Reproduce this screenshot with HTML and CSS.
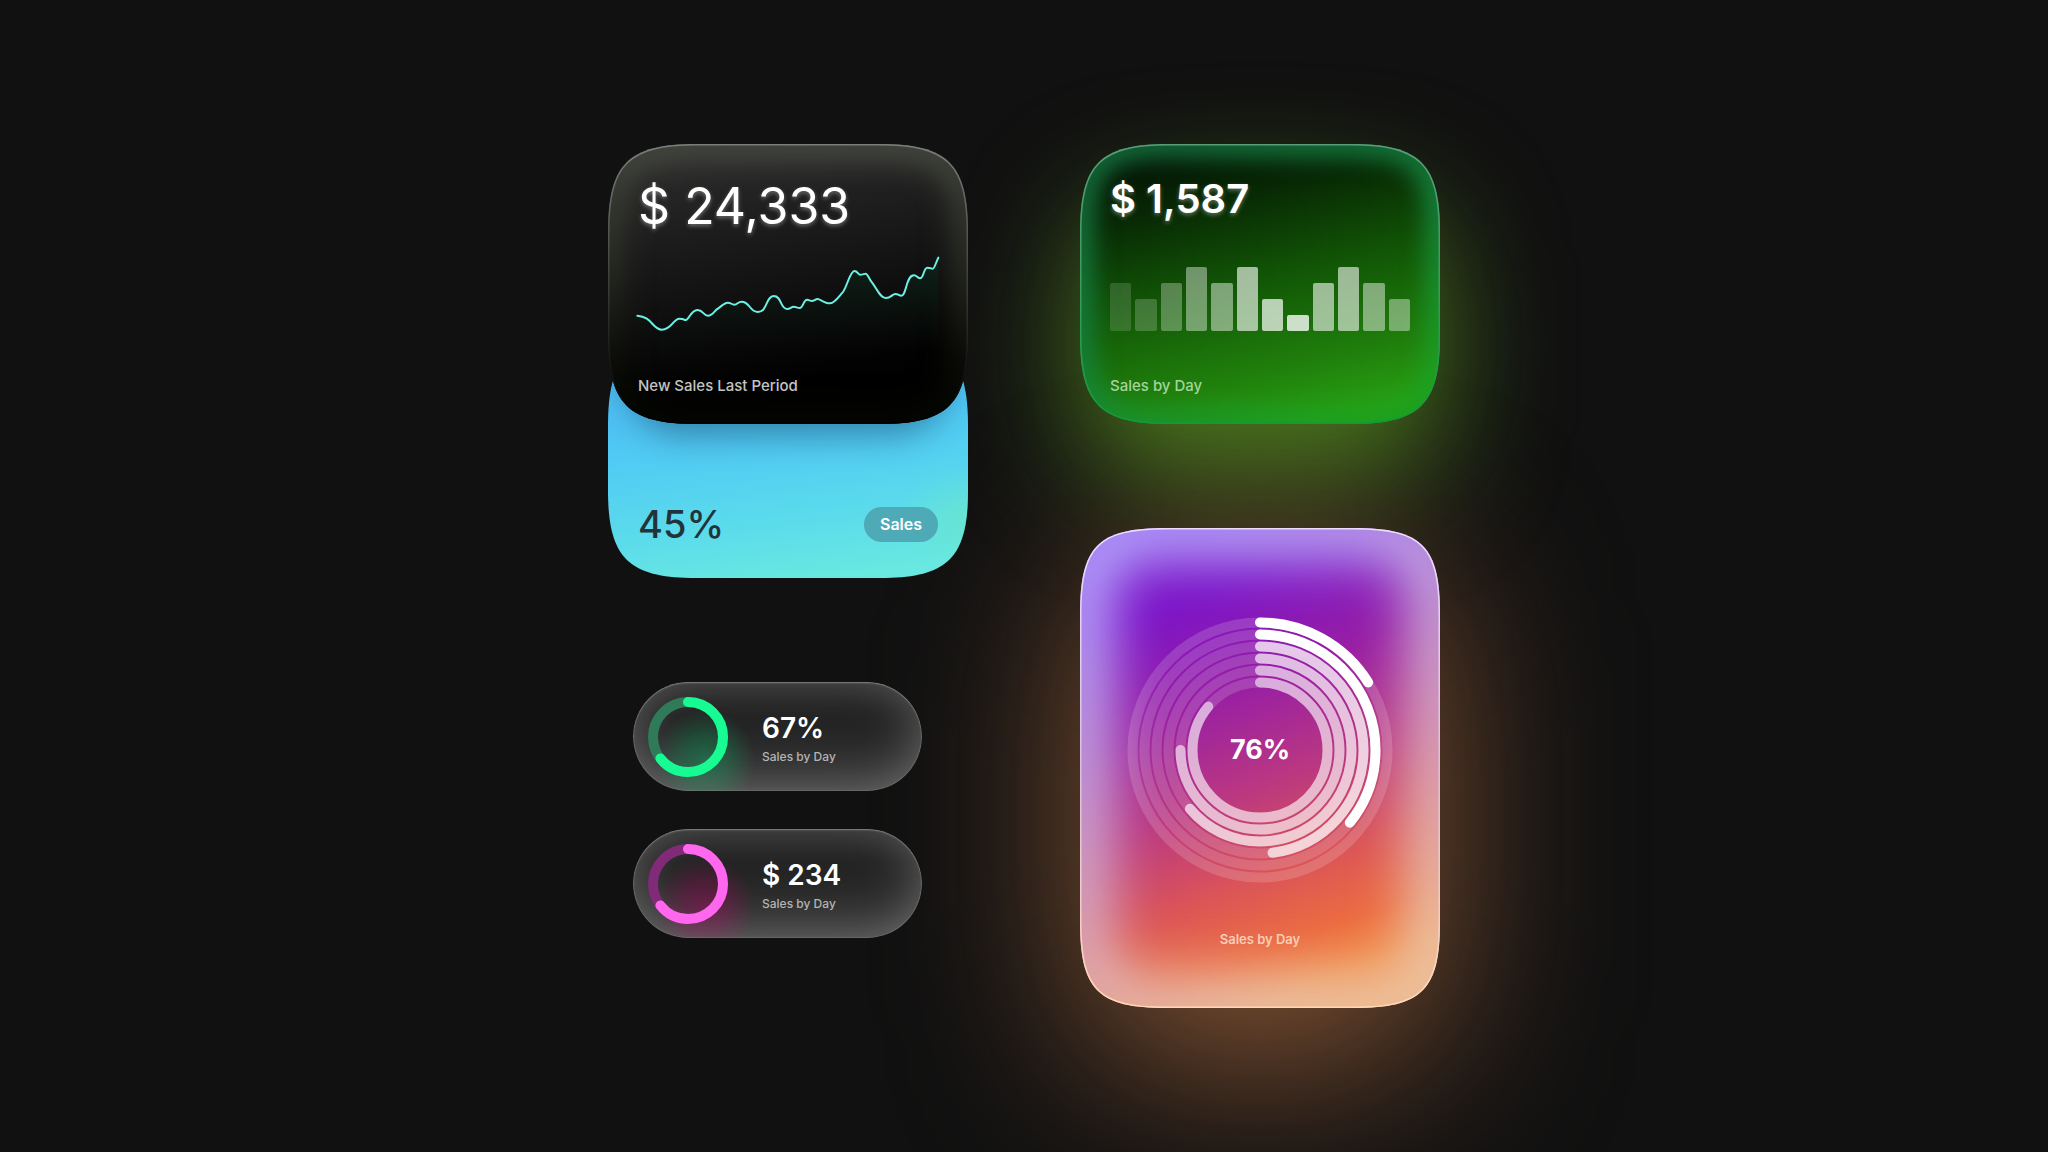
FILE: index.html
```html
<!DOCTYPE html>
<html lang="en">
<head>
<meta charset="utf-8">
<meta name="viewport" content="width=device-width, initial-scale=1">
<title>Sales widgets</title>
<link rel="stylesheet" href="styles.css">
</head>
<body>
<main class="board">
  <div class="column">
    <div class="stack">
      <section class="card card-dark">
        <svg class="backdrop" viewBox="0 0 360 280" aria-hidden="true">
          <defs>
            <path id="tile" d="M0 88C0 20 20 0 88 0H272C340 0 360 20 360 88V192C360 260 340 280 272 280H88C20 280 0 260 0 192Z"/>
            <clipPath id="tile-clip"><use href="#tile"/></clipPath>
            <linearGradient id="dark-fill" x1="0.4" y1="0" x2="0.6" y2="1">
              <stop offset="0" stop-color="#2c2c2c"/><stop offset="0.35" stop-color="#191919"/><stop offset="0.8" stop-color="#020202"/><stop offset="1" stop-color="#000"/>
            </linearGradient>
            <linearGradient id="dark-rim" gradientUnits="userSpaceOnUse" x1="0" y1="0" x2="0" y2="280">
              <stop offset="0" stop-color="#454840"/><stop offset="0.45" stop-color="#272a22"/><stop offset="0.8" stop-color="#0a0c06"/><stop offset="1" stop-color="#030500"/>
            </linearGradient>
            <linearGradient id="dark-edge" x1="0" y1="0" x2="0" y2="1">
              <stop offset="0" stop-color="#7c7c7a"/><stop offset="0.4" stop-color="#4a4a48"/><stop offset="0.75" stop-color="#1a1a1a"/><stop offset="1" stop-color="#000"/>
            </linearGradient>
            <filter id="soft" x="-20%" y="-20%" width="140%" height="140%" color-interpolation-filters="sRGB"><feGaussianBlur stdDeviation="14"/></filter>
          </defs>
          <g clip-path="url(#tile-clip)">
            <use href="#tile" fill="url(#dark-fill)"/>
            <use href="#tile" fill="none" stroke="url(#dark-rim)" stroke-width="34" filter="url(#soft)"/>
            <use href="#tile" fill="none" stroke="url(#dark-edge)" stroke-width="3"/>
          </g>
        </svg>
        <div class="content">
          <h2 class="amount amount-large">$ 24,333</h2>
          <svg class="trend" viewBox="42 12 900 318" aria-hidden="true">
            <defs>
              <linearGradient id="trend-fill" x1="0" y1="0" x2="0" y2="1">
                <stop offset="0" stop-color="#0c2a1c" stop-opacity="0.7"/><stop offset="1" stop-color="#06140c" stop-opacity="0"/>
              </linearGradient>
            </defs>
            <path class="trend-area" fill="url(#trend-fill)" d="M40 227C85 230 85 269 114 269S148 236 166 236S178 241 186 240S202 210 220 210S238 227 252 227S272 211 280 207S300 188 311 188S322 194 331 194S342 185 353 185C378 185 376 216 402 216C430 216 426 168 449 168C474 168 468 207 490 207C498 207 502 200 509 200S520 204 527 204C538 204 538 179 549 179C555 179 558 183 564 183S574 177 581 177S602 190 617 190S644 170 656 157S678 93 691 93C701 93 702 104 709 104S720 101 725 101S735 114 740 122C762 150 768 174 785 174S804 162 814 162S824 167 832 167C848 167 845 106 870 106C878 106 882 115 888 115C900 115 898 83 910 83S920 86 926 86S936 66 943 53V330H40Z"/>
            <path class="trend-line" d="M40 227C85 230 85 269 114 269S148 236 166 236S178 241 186 240S202 210 220 210S238 227 252 227S272 211 280 207S300 188 311 188S322 194 331 194S342 185 353 185C378 185 376 216 402 216C430 216 426 168 449 168C474 168 468 207 490 207C498 207 502 200 509 200S520 204 527 204C538 204 538 179 549 179C555 179 558 183 564 183S574 177 581 177S602 190 617 190S644 170 656 157S678 93 691 93C701 93 702 104 709 104S720 101 725 101S735 114 740 122C762 150 768 174 785 174S804 162 814 162S824 167 832 167C848 167 845 106 870 106C878 106 882 115 888 115C900 115 898 83 910 83S920 86 926 86S936 66 943 53"/>
          </svg>
          <p class="caption">New Sales Last Period</p>
        </div>
      </section>
      <section class="card card-blue">
        <svg class="backdrop" viewBox="0 0 360 240" aria-hidden="true">
          <defs>
            <clipPath id="blue-clip"><path d="M0 88C0 20 20 0 88 0H272C340 0 360 20 360 88V152C360 220 340 240 272 240H88C20 240 0 220 0 152Z"/></clipPath>
            <linearGradient id="blue-fill" x1="0.42" y1="0.1" x2="0.58" y2="1">
              <stop offset="0" stop-color="#4cb8f2"/><stop offset="0.35" stop-color="#50caf4"/><stop offset="0.7" stop-color="#5adaec"/><stop offset="1" stop-color="#68e8e0"/>
            </linearGradient>
            <radialGradient id="mint" cx="1.02" cy="0.75" r="0.22">
              <stop offset="0" stop-color="#6ee8bc" stop-opacity="0.6"/><stop offset="1" stop-color="#6ee8cc" stop-opacity="0"/>
            </radialGradient>
            <filter id="shade" x="-20%" y="-30%" width="140%" height="160%" color-interpolation-filters="sRGB"><feGaussianBlur stdDeviation="16"/></filter>
          </defs>
          <g clip-path="url(#blue-clip)">
            <rect width="360" height="240" fill="url(#blue-fill)"/>
            <rect width="360" height="240" fill="url(#mint)"/>
            <rect x="16" y="-60" width="328" height="158" rx="60" fill="#1a4a6a" opacity="0.5" filter="url(#shade)"/>
          </g>
        </svg>
        <div class="content content-row">
          <p class="share">45%</p>
          <button class="tag" type="button">Sales</button>
        </div>
      </section>
    </div>
    <div class="pills">
      <section class="pill pill-green">
        <svg class="donut" viewBox="0 0 80 80" aria-hidden="true">
          <circle class="donut-track" cx="40" cy="40" r="35"/>
          <circle class="donut-value" cx="40" cy="40" r="35" pathLength="360" stroke-dasharray="232 360"/>
        </svg>
        <div class="pill-text">
          <p class="pill-number">67%</p>
          <p class="pill-label">Sales by Day</p>
        </div>
      </section>
      <section class="pill pill-pink">
        <svg class="donut" viewBox="0 0 80 80" aria-hidden="true">
          <circle class="donut-track" cx="40" cy="40" r="35"/>
          <circle class="donut-value" cx="40" cy="40" r="35" pathLength="360" stroke-dasharray="232 360"/>
        </svg>
        <div class="pill-text">
          <p class="pill-number">$ 234</p>
          <p class="pill-label">Sales by Day</p>
        </div>
      </section>
    </div>
  </div>
  <div class="column">
    <section class="card card-green">
      <svg class="backdrop" viewBox="0 0 360 280" aria-hidden="true">
        <defs>
          <linearGradient id="green-fill" x1="0.36" y1="0" x2="0.64" y2="1">
            <stop offset="0" stop-color="#041204"/><stop offset="0.2" stop-color="#082a04"/><stop offset="0.5" stop-color="#125806"/><stop offset="0.8" stop-color="#20800c"/><stop offset="1" stop-color="#28a214"/>
          </linearGradient>
          <linearGradient id="green-rim" gradientUnits="userSpaceOnUse" x1="120" y1="0" x2="240" y2="280">
            <stop offset="0" stop-color="#146c3a"/><stop offset="0.5" stop-color="#14803a"/><stop offset="1" stop-color="#1ca020"/>
          </linearGradient>
          <linearGradient id="green-edge" x1="0" y1="0" x2="0" y2="1">
            <stop offset="0" stop-color="#5a9c7a"/><stop offset="0.5" stop-color="#3f9a60"/><stop offset="1" stop-color="#149838"/>
          </linearGradient>
          <filter id="soft-green" x="-20%" y="-20%" width="140%" height="140%" color-interpolation-filters="sRGB"><feGaussianBlur stdDeviation="11"/></filter>
        </defs>
        <g clip-path="url(#tile-clip)">
          <use href="#tile" fill="url(#green-fill)"/>
          <use href="#tile" fill="none" stroke="url(#green-rim)" stroke-width="28" filter="url(#soft-green)"/>
          <use href="#tile" fill="none" stroke="url(#green-edge)" stroke-width="3"/>
        </g>
      </svg>
      <div class="content">
        <h2 class="amount">$ 1,587</h2>
        <div class="bars">
          <span class="bar" style="height:48px;opacity:.15"></span>
          <span class="bar" style="height:32px;opacity:.2"></span>
          <span class="bar" style="height:48px;opacity:.3"></span>
          <span class="bar" style="height:64px;opacity:.41"></span>
          <span class="bar" style="height:48px;opacity:.46"></span>
          <span class="bar" style="height:64px;opacity:.62"></span>
          <span class="bar" style="height:32px;opacity:.7"></span>
          <span class="bar" style="height:16px;opacity:.78"></span>
          <span class="bar" style="height:48px;opacity:.58"></span>
          <span class="bar" style="height:64px;opacity:.58"></span>
          <span class="bar" style="height:48px;opacity:.46"></span>
          <span class="bar" style="height:32px;opacity:.4"></span>
        </div>
        <p class="caption caption-green">Sales by Day</p>
      </div>
    </section>
    <section class="card card-sunset">
      <svg class="backdrop" viewBox="0 0 360 480" aria-hidden="true">
        <defs>
          <path id="tall" d="M0 86C0 18 18 0 86 0H274C342 0 360 18 360 86V394C360 462 342 480 274 480H86C18 480 0 462 0 394Z"/>
          <clipPath id="tall-clip"><use href="#tall"/></clipPath>
          <linearGradient id="sunset-fill" gradientUnits="userSpaceOnUse" x1="110" y1="70" x2="250" y2="450">
            <stop offset="0" stop-color="#7c14c8"/><stop offset="0.25" stop-color="#981fa4"/><stop offset="0.5" stop-color="#bb3880"/><stop offset="0.72" stop-color="#dc5656"/><stop offset="0.88" stop-color="#ec6c40"/><stop offset="1" stop-color="#f28c48"/>
          </linearGradient>
          <linearGradient id="sunset-rim" gradientUnits="userSpaceOnUse" x1="60" y1="20" x2="300" y2="460">
            <stop offset="0" stop-color="#b4a8ff"/><stop offset="0.3" stop-color="#c4ace4"/><stop offset="0.65" stop-color="#dcb0bc"/><stop offset="1" stop-color="#ecc8a8"/>
          </linearGradient>
          <linearGradient id="sunset-edge" x1="0" y1="0" x2="0" y2="1">
            <stop offset="0" stop-color="#ecdcff"/><stop offset="0.5" stop-color="#d8c0e0"/><stop offset="1" stop-color="#ffd8b8"/>
          </linearGradient>
          <filter id="soft-sunset" x="-35%" y="-35%" width="170%" height="170%" color-interpolation-filters="sRGB"><feGaussianBlur stdDeviation="27"/></filter>
        </defs>
        <g clip-path="url(#tall-clip)">
          <use href="#tall" fill="url(#sunset-fill)"/>
          <use href="#tall" fill="none" stroke="url(#sunset-rim)" stroke-width="62" filter="url(#soft-sunset)"/>
          <use href="#tall" fill="none" stroke="url(#sunset-edge)" stroke-width="3"/>
        </g>
      </svg>
      <div class="content content-center">
        <div class="gauge">
          <svg class="rings" viewBox="0 0 266 266" aria-hidden="true">
            <g class="ring-tracks">
              <circle cx="133" cy="133" r="127.5"/><circle cx="133" cy="133" r="115.5"/><circle cx="133" cy="133" r="103.5"/><circle cx="133" cy="133" r="91.5"/><circle cx="133" cy="133" r="79.5"/><circle cx="133" cy="133" r="67.5"/>
            </g>
            <g class="ring-values" transform="rotate(-90 133 133)">
              <circle cx="133" cy="133" r="127.5" pathLength="360" stroke-dasharray="58 360"/>
              <circle cx="133" cy="133" r="115.5" pathLength="360" stroke-dasharray="129 360"/>
              <circle cx="133" cy="133" r="103.5" pathLength="360" stroke-dasharray="173 360" stroke-opacity="0.71"/>
              <circle cx="133" cy="133" r="91.5" pathLength="360" stroke-dasharray="230 360" stroke-opacity="0.65"/>
              <circle cx="133" cy="133" r="79.5" pathLength="360" stroke-dasharray="270 360" stroke-opacity="0.58"/>
              <circle cx="133" cy="133" r="67.5" pathLength="360" stroke-dasharray="310 360" stroke-opacity="0.56"/>
            </g>
          </svg>
          <p class="gauge-value">76%</p>
        </div>
        <p class="gauge-label">Sales by Day</p>
      </div>
    </section>
  </div>
</main>
</body>
</html>
```

FILE: styles.css
```css
* {
  box-sizing: border-box;
}

body {
  margin: 0;
  background: #111;
  color: #fff;
  font-family: Inter, "Liberation Sans", sans-serif;
}

h2,
p {
  margin: 0;
  font-weight: 400;
}

.board {
  display: grid;
  grid-template-columns: repeat(auto-fit, 360px);
  justify-content: center;
  align-content: center;
  column-gap: 112px;
  row-gap: 104px;
  min-height: 100vh;
  padding: 40px 0;
  overflow: hidden;
  isolation: isolate;
}

.column {
  display: flex;
  flex-direction: column;
  gap: 104px;
}

.stack {
  display: flex;
  flex-direction: column;
}

/* Cards: the drawn surface and the content share one grid cell */
.card {
  display: grid;
  position: relative;
}

.backdrop,
.content {
  grid-area: 1 / 1;
  position: relative;
}

.backdrop {
  display: block;
  width: 100%;
}

.content {
  display: flex;
  flex-direction: column;
  padding: 24px 30px;
}

.card-dark {
  z-index: 1;
}

.card-blue {
  margin-top: -86px;
}

.content-row {
  flex-direction: row;
  align-items: flex-end;
  justify-content: space-between;
  padding: 0 30px 36px;
}

.content-center {
  align-items: center;
  padding: 89px 0 0;
}

.amount {
  font-size: 40px;
  font-weight: 600;
  line-height: 61px;
  text-shadow: 0 2px 4px rgba(255, 255, 255, 0.35);
}

.amount-large {
  font-size: 50px;
  font-weight: 400;
  line-height: 76px;
}

.trend {
  display: block;
  width: 300px;
  height: 106px;
  overflow: visible;
}

.trend-line {
  fill: none;
  stroke: #6cf0e4;
  stroke-width: 6;
  stroke-linecap: round;
  stroke-linejoin: round;
}

.caption {
  margin-top: auto;
  font-size: 15px;
  font-weight: 500;
  line-height: 28px;
  color: #c4c4c4;
}

.caption-green {
  color: #a4d49c;
}

.share {
  font-size: 38px;
  font-weight: 500;
  line-height: 36px;
  color: #22343a;
}

.tag {
  height: 35px;
  padding: 0 16px;
  border: 0;
  border-radius: 18px;
  background: #4eaab6;
  color: #fff;
  font: 600 16px/35px Inter, "Liberation Sans", sans-serif;
}

.bars {
  display: grid;
  grid-template-columns: repeat(12, 1fr);
  align-items: end;
  gap: 4px;
  height: 64px;
  margin-top: 38px;
}

.bar {
  border-radius: 2px;
  background: #fff;
}

/* Light spilling from the two bright cards */
.card-green::before,
.card-sunset::before {
  content: "";
  position: absolute;
  z-index: -1;
  border-radius: 80px;
}

.card-green::before {
  inset: 60px 0 -60px;
  background: rgba(84, 136, 32, 0.85);
  filter: blur(60px);
}

.card-sunset::before {
  inset: 40px 0 -60px;
  background: rgba(150, 94, 58, 0.85);
  filter: blur(90px);
}

.pills {
  display: flex;
  flex-direction: column;
  gap: 38px;
  padding-left: 25px;
}

.pill {
  display: flex;
  align-items: center;
  gap: 32px;
  width: 289px;
  height: 109px;
  padding-left: 15px;
  border-radius: 55px;
  box-shadow: inset 0 1px 2px rgba(255, 255, 255, 0.3), inset 0 0 1px 1px rgba(255, 255, 255, 0.1), inset 0 0 48px rgba(255, 255, 255, 0.28);
}

.pill-green {
  --ring: #17fb92;
  --track: #2f7a58;
  background: radial-gradient(circle at 72px 78px, rgba(20, 140, 86, 0.6), rgba(20, 140, 86, 0.35) 26px, rgba(20, 140, 86, 0) 50px), linear-gradient(#202020 30%, #3a3a3a);
}

.pill-pink {
  --ring: #ff68ee;
  --track: #802a78;
  background: radial-gradient(circle at 72px 78px, rgba(140, 16, 84, 0.6), rgba(140, 16, 84, 0.35) 26px, rgba(140, 16, 84, 0) 50px), linear-gradient(#202020 30%, #3a3a3a);
}

.donut {
  width: 80px;
  height: 80px;
  transform: rotate(-90deg);
}

.donut circle {
  fill: none;
  stroke-width: 10;
}

.donut .donut-track {
  stroke: var(--track);
}

.donut .donut-value {
  stroke: var(--ring);
  stroke-linecap: round;
}

.pill-text {
  padding: 6px 0 0 2px;
}

.pill-number {
  font-size: 28px;
  font-weight: 600;
  line-height: 34px;
}

.pill-label {
  font-size: 12px;
  font-weight: 500;
  line-height: 24px;
  color: #b4b4b4;
}

.gauge {
  display: grid;
  place-items: center;
}

.rings,
.gauge-value {
  grid-area: 1 / 1;
}

.rings {
  width: 266px;
  height: 266px;
}

.ring-tracks,
.ring-values {
  fill: none;
  stroke: #fff;
}

.ring-tracks {
  stroke-width: 10;
  stroke-opacity: 0.16;
}

.ring-values {
  stroke-width: 10;
  stroke-linecap: round;
}

.gauge-value {
  font-size: 27px;
  font-weight: 700;
  line-height: 34px;
}

.gauge-label {
  margin-top: 46px;
  font-size: 13px;
  font-weight: 600;
  line-height: 20px;
  color: #f8cdb4;
}
```
